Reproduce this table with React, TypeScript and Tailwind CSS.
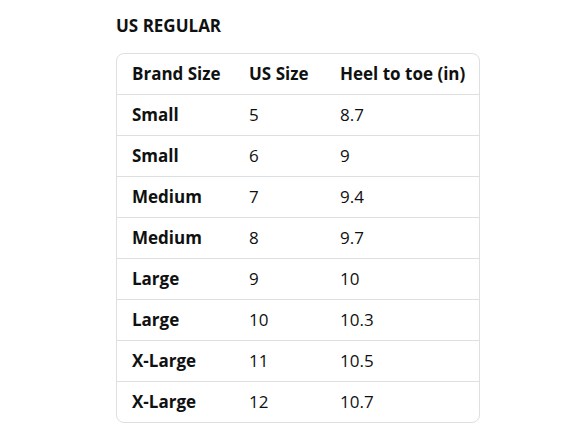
const rows = [
  ["Small", "5", "8.7"],
  ["Small", "6", "9"],
  ["Medium", "7", "9.4"],
  ["Medium", "8", "9.7"],
  ["Large", "9", "10"],
  ["Large", "10", "10.3"],
  ["X-Large", "11", "10.5"],
  ["X-Large", "12", "10.7"],
]

export default function App() {
  return (
    <div className="w-[588px] h-[441px] bg-white pl-[116px] pt-[15px] text-[#0f1111] font-['Open_Sans',sans-serif]">
      <h2 className="text-[17px] font-bold leading-[22px]">US REGULAR</h2>
      <div className="mt-[16px] w-[364px] rounded-[8px] border border-[#dde0e0] overflow-hidden">
        <div className="grid grid-cols-[117px_91px_1fr] h-[40px] items-center text-[17px] font-bold">
          <div className="pl-[15px]">Brand Size</div>
          <div className="pl-[15px]">US Size</div>
          <div className="pl-[15px]">Heel to toe (in)</div>
        </div>
        {rows.map((r, i) => (
          <div
            key={i}
            className="grid grid-cols-[117px_91px_1fr] h-[41px] items-center border-t border-[#dde0e0] text-[17px]"
          >
            <div className="pl-[15px] font-bold">{r[0]}</div>
            <div className="pl-[15px]">{r[1]}</div>
            <div className="pl-[15px]">{r[2]}</div>
          </div>
        ))}
      </div>
    </div>
  )
}
